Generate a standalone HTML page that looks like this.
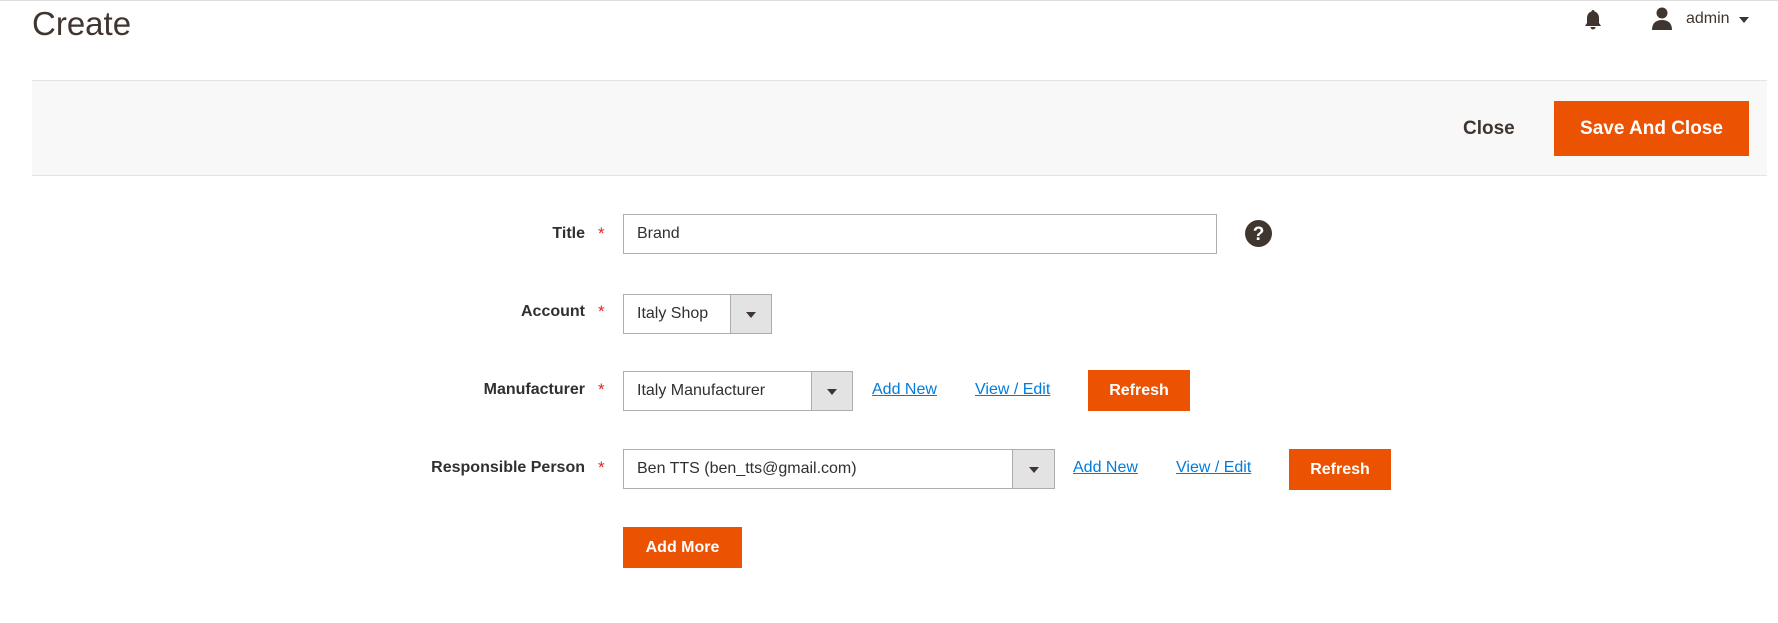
<!DOCTYPE html>
<html><head><style>
*{margin:0;padding:0;box-sizing:border-box}
body{width:1778px;height:623px;background:#fff;font-family:"Liberation Sans",sans-serif;color:#303030;position:relative;overflow:hidden;border-top:1px solid #ddd}
.a{position:absolute}
.lbl{position:absolute;right:1193px;font-size:16px;font-weight:bold;color:#303030;white-space:nowrap}
.star{position:absolute;left:598px;color:#e22626;font-size:17px}
.inp{position:absolute;left:623px;border:1px solid #adadad;background:#fff;font-size:16px;padding-left:13px;display:flex;align-items:center;color:#303030}
.arr{position:absolute;right:0;top:0;bottom:0;background:#e3e3e3;border-left:1px solid #adadad}
.arr:after{content:"";position:absolute;left:50%;top:50%;margin:-2px 0 0 -5px;border:5px solid transparent;border-top:6px solid #41362f;border-bottom:0}
.btn{position:absolute;background:#eb5202;color:#fff;font-weight:bold;font-size:16px;display:flex;align-items:center;justify-content:center}
.lnk{position:absolute;color:#007bdb;text-decoration:underline;font-size:16px}
</style></head><body>
<div class="a" style="left:32px;top:4px;font-size:33px;color:#41362f">Create</div>
<svg class="a" style="left:1584px;top:8px" width="18" height="22" viewBox="0 0 18 22"><path d="M9 1c1 0 1.5.7 1.5 1.5C13.5 3.3 15 6 15 9v5l2 3H1l2-3V9c0-3 1.5-5.7 4.5-6.5C7.5 1.7 8 1 9 1zM6.5 18h5a2.5 2.5 0 0 1-5 0z" fill="#41362f"/></svg>
<svg class="a" style="left:1650px;top:5px" width="24" height="24" viewBox="0 0 24 24"><circle cx="12" cy="7" r="5.5" fill="#41362f"/><path d="M2 24c0-7 4-10 10-10s10 3 10 10z" fill="#41362f"/></svg>
<div class="a" style="left:1686px;top:9px;font-size:16px;color:#41362f">admin</div>
<div class="a" style="left:1739px;top:16px;border:5px solid transparent;border-top:6px solid #41362f"></div>
<div class="a" style="left:32px;top:79px;width:1735px;height:96px;background:#f8f8f8;border-top:1px solid #e3e3e3;border-bottom:1px solid #e3e3e3"></div>
<div class="a" style="left:1463px;top:117px;font-size:19px;font-weight:bold;color:#41362f">Close</div>
<div class="btn" style="left:1554px;top:100px;width:195px;height:55px;font-size:19px">Save And Close</div>

<div class="lbl" style="top:224px">Title</div><div class="star" style="top:223px">*</div>
<div class="inp" style="top:213px;width:594px;height:40px">Brand</div>
<svg class="a" style="left:1245px;top:219px" width="27" height="27" viewBox="0 0 27 27"><circle cx="13.5" cy="13.5" r="13.5" fill="#41362f"/><text x="13.5" y="20" text-anchor="middle" font-family="Liberation Sans" font-weight="bold" font-size="19" fill="#fff">?</text></svg>

<div class="lbl" style="top:302px">Account</div><div class="star" style="top:301px">*</div>
<div class="inp" style="top:293px;width:149px;height:40px">Italy Shop<div class="arr" style="width:41px"></div></div>

<div class="lbl" style="top:380px">Manufacturer</div><div class="star" style="top:379px">*</div>
<div class="inp" style="top:370px;width:230px;height:40px">Italy Manufacturer<div class="arr" style="width:41px"></div></div>
<div class="lnk" style="left:872px;top:380px">Add New</div>
<div class="lnk" style="left:975px;top:380px">View / Edit</div>
<div class="btn" style="left:1088px;top:369px;width:102px;height:41px">Refresh</div>

<div class="lbl" style="top:458px">Responsible Person</div><div class="star" style="top:457px">*</div>
<div class="inp" style="top:448px;width:432px;height:40px">Ben TTS (ben_tts@gmail.com)<div class="arr" style="width:42px"></div></div>
<div class="lnk" style="left:1073px;top:458px">Add New</div>
<div class="lnk" style="left:1176px;top:458px">View / Edit</div>
<div class="btn" style="left:1289px;top:448px;width:102px;height:41px">Refresh</div>

<div class="btn" style="left:623px;top:526px;width:119px;height:41px">Add More</div>
</body></html>
